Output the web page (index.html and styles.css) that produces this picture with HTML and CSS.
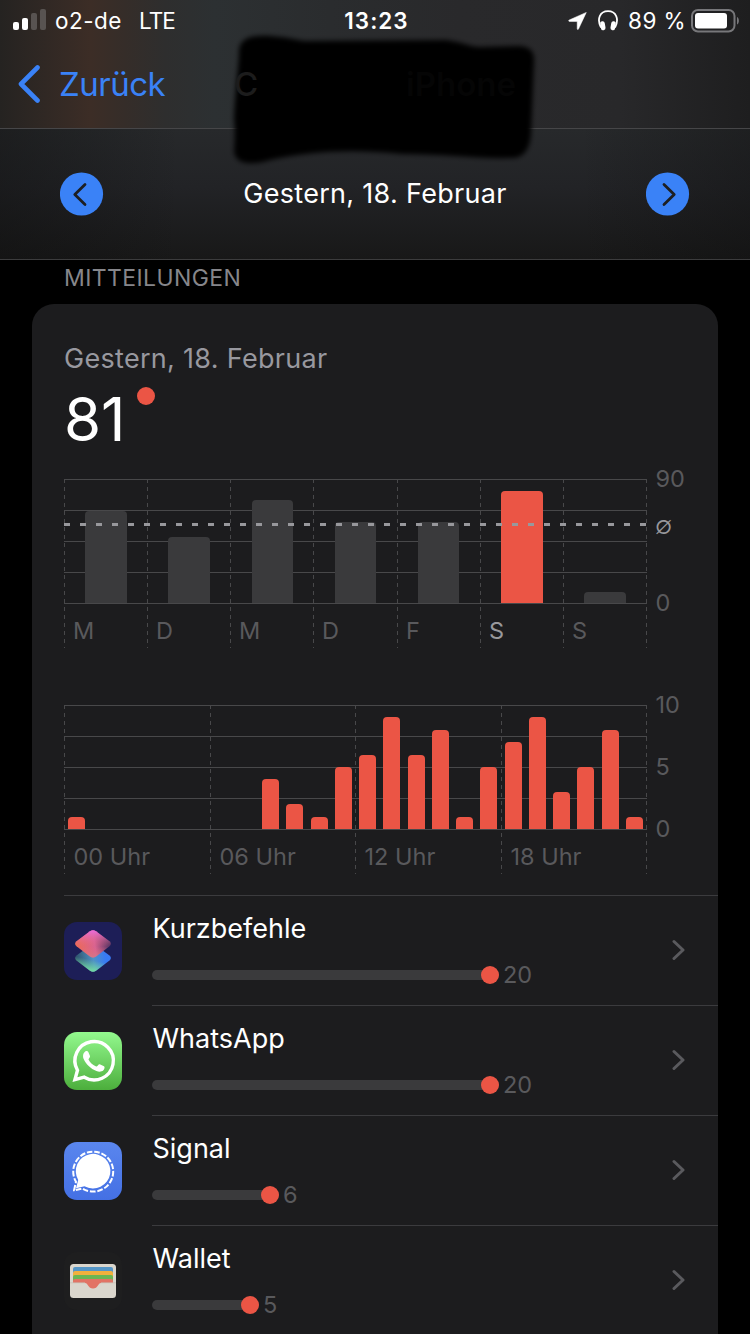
FILE: index.html
```html
<!doctype html>
<html lang="de">
    <head>
        <meta charset="UTF-8" />
        <meta name="viewport" content="width=device-width, initial-scale=1.0" />
        <title>Bildschirmzeit</title>
        <link rel="stylesheet" href="styles.css">
    </head>
    <body>
        <header class="header">
            <div class="nav">
                <div class="status">
                    <div class="status-left">
                        <svg class="signal" width="34" height="22" viewBox="0 0 34 22">
                            <rect x="0" y="13" width="6" height="8" rx="2" fill="#fff" />
                            <rect x="9" y="9" width="6" height="12" rx="2" fill="#fff" />
                            <rect x="18" y="4" width="6" height="17" rx="2" fill="#585351" />
                            <rect x="27" y="0" width="6" height="21" rx="2" fill="#585351" />
                        </svg>
                        <span class="carrier">o2-de</span>
                        <span class="network">LTE</span>
                    </div>
                    <span class="clock">13:23</span>
                    <div class="status-right">
                        <svg width="19" height="18" viewBox="0 0 19 18">
                            <path d="M18.300 .4 10.500 17c-.4.8-1.300.6-1.300-.3V9.400H1.500c-1 0-1.200-1-.3-1.400Z" fill="#fff" stroke="#fff" stroke-width=".5" stroke-linejoin="round" />
                        </svg>
                        <svg class="phones" width="20" height="21" viewBox="0 0 20 21">
                            <path d="M3 17.500C-1.500 9 2 1.200 10 1.200s11.500 7.800 7 16.300" fill="none" stroke="#fff" stroke-width="1.800" />
                            <rect x="2.600" y="11.200" width="4.600" height="9" rx="2.200" fill="#fff" transform="rotate(-10 5 16)" />
                            <rect x="12.800" y="11.200" width="4.600" height="9" rx="2.200" fill="#fff" transform="rotate(10 15 16)" />
                        </svg>
                        <span class="percent">89 %</span>
                        <svg width="49" height="24" viewBox="0 0 49 24">
                            <rect x="1" y="1" width="42.500" height="21.500" rx="6" fill="none" stroke="#77777a" stroke-width="2" />
                            <rect x="4" y="4" width="32" height="15.500" rx="3" fill="#fff" />
                            <path d="M46 8c2.500 1 2.500 6.500 0 7.500Z" fill="#77777a" />
                        </svg>
                    </div>
                </div>
                <div class="nav-row">
                    <svg width="24" height="38" viewBox="0 0 24 38">
                        <path d="M20.500 2.500 4 19l16.500 16.500" fill="none" stroke="#3a82f7" stroke-width="4.600" stroke-linecap="round" stroke-linejoin="round" />
                    </svg>
                    <span class="back">Zurück</span>
                </div>
            </div>
            <div class="day-nav">
                <svg width="44" height="44" viewBox="0 0 44 44">
                    <circle cx="21.500" cy="22" r="21.600" fill="#3a82f7" />
                    <path d="M25 12.500 14.800 22.500 25 32.500" fill="none" stroke="#1d1f22" stroke-width="2.800" stroke-linecap="round" stroke-linejoin="round" />
                </svg>
                <span class="day">Gestern, 18. Februar</span>
                <svg width="44" height="44" viewBox="0 0 44 44">
                    <circle cx="21.500" cy="22" r="21.600" fill="#3a82f7" />
                    <path d="M18 12.500 28.200 22.500 18 32.500" fill="none" stroke="#1d1f22" stroke-width="2.800" stroke-linecap="round" stroke-linejoin="round" />
                </svg>
            </div>
            <!-- blacked out device name -->
            <svg class="marker" width="330" height="150" viewBox="220 25 330 150">
                <defs>
                    <filter id="soft" x="-10%" y="-10%" width="120%" height="120%">
                        <feGaussianBlur stdDeviation="2.800" />
                    </filter>
                </defs>
                <path d="M246 39c10-6 34-3 58 2l142-1c16 2 24 7 34 7l38-1c12 0 17 6 16 16l-3 72c-1 16-8 24-19 24-36 1-66-4-110-4-50-5-92-3-132 6-20 6-34 4-36-8 1-16 1-25 0-32 1-28 5-56 5-68 0-6 2-10 7-13Z" fill="#000" filter="url(#soft)" />
                <text x="234" y="96" class="marker-start">C</text>
                <text x="406" y="96" class="marker-end">iPhone</text>
            </svg>
        </header>

        <h2>MITTEILUNGEN</h2>

        <section class="card">
            <div class="card-date">Gestern, 18. Februar</div>
            <div class="total"><span>81</span><i class="total-dot"></i></div>

            <svg class="week-chart" width="654" height="200" viewBox="0 0 654 200">
                <path class="grid" d="M0 15.500h583M0 46.500h583M0 77.500h583M0 108.500h583M0 139.500h583" />
                <path class="grid dashed" d="M.5 15v169M83.500 15v169M166.500 15v169M249.500 15v169M333.500 15v169M416.500 15v169M499.500 15v169M582.500 15v169" />
                <clipPath id="week-plot"><rect width="583" height="139" /></clipPath>
                <g class="bars muted" clip-path="url(#week-plot)">
                    <rect x="21" y="47" width="42" height="100" rx="4" />
                    <rect x="104" y="73" width="42" height="100" rx="4" />
                    <rect x="188" y="36" width="41" height="120" rx="4" />
                    <rect x="271" y="58" width="41" height="100" rx="4" />
                    <rect x="354" y="58" width="41" height="100" rx="4" />
                    <rect class="active" x="437" y="27" width="42" height="120" rx="4" />
                    <rect x="520" y="128" width="42" height="40" rx="4" />
                </g>
                <path class="average" d="M0 60.500h583" />
                <g class="labels">
                    <text x="9" y="175">M</text>
                    <text x="92" y="175">D</text>
                    <text x="175" y="175">M</text>
                    <text x="258" y="175">D</text>
                    <text x="342" y="175">F</text>
                    <text x="425" y="175" class="current">S</text>
                    <text x="508" y="175">S</text>
                    <text x="591.500" y="23">90</text>
                    <text x="591" y="70" class="avg-label">∅</text>
                    <text x="591.500" y="147">0</text>
                </g>
            </svg>

            <svg class="hour-chart" width="654" height="205" viewBox="0 0 654 205">
                <path class="grid" d="M0 15.500h583M0 46.500h583M0 77.500h583M0 108.500h583M0 139.500h583" />
                <path class="grid dashed" d="M.5 15v169M146.500 15v169M291.500 15v169M437.500 15v169M582.500 15v169" />
                <clipPath id="hour-plot"><rect width="583" height="139" /></clipPath>
                <g class="bars" clip-path="url(#hour-plot)">
                    <rect x="4" y="127" width="17" height="30" rx="4" />
                    <rect x="198" y="89" width="17" height="70" rx="4" />
                    <rect x="222" y="114" width="17" height="40" rx="4" />
                    <rect x="247" y="127" width="17" height="30" rx="4" />
                    <rect x="271" y="77" width="17" height="80" rx="4" />
                    <rect x="295" y="65" width="17" height="90" rx="4" />
                    <rect x="319" y="27" width="17" height="130" rx="4" />
                    <rect x="344" y="65" width="17" height="90" rx="4" />
                    <rect x="368" y="40" width="17" height="110" rx="4" />
                    <rect x="392" y="127" width="17" height="30" rx="4" />
                    <rect x="416" y="77" width="17" height="80" rx="4" />
                    <rect x="441" y="52" width="17" height="100" rx="4" />
                    <rect x="465" y="27" width="17" height="130" rx="4" />
                    <rect x="489" y="102" width="17" height="50" rx="4" />
                    <rect x="513" y="77" width="17" height="80" rx="4" />
                    <rect x="538" y="40" width="17" height="110" rx="4" />
                    <rect x="562" y="127" width="17" height="30" rx="4" />
                </g>
                <g class="labels">
                    <text x="9.500" y="175">00 Uhr</text>
                    <text x="155.500" y="175">06 Uhr</text>
                    <text x="300.500" y="175">12 Uhr</text>
                    <text x="446.500" y="175">18 Uhr</text>
                    <text x="591.500" y="23">10</text>
                    <text x="591.500" y="85">5</text>
                    <text x="591.500" y="147">0</text>
                </g>
            </svg>

            <ul class="apps">
                <li>
                    <svg class="app-icon" viewBox="0 0 58 58">
                        <defs>
                            <linearGradient id="sc-top" x1="0" y1=".6" x2="1" y2=".5">
                                <stop offset="0" stop-color="#ee6b52" />
                                <stop offset=".55" stop-color="#d96391" />
                                <stop offset="1" stop-color="#4a3060" />
                            </linearGradient>
                            <linearGradient id="sc-pink" x1=".5" y1="0" x2=".5" y2="1">
                                <stop offset="0" stop-color="#ea6be0" />
                                <stop offset=".6" stop-color="#e66a78" stop-opacity="0" />
                                <stop offset="1" stop-color="#d08088" stop-opacity=".7" />
                            </linearGradient>
                            <linearGradient id="sc-bottom" x1="0" y1=".5" x2="1" y2=".4">
                                <stop offset="0" stop-color="#2c4f66" />
                                <stop offset=".5" stop-color="#4f93c4" />
                                <stop offset=".85" stop-color="#377af5" />
                            </linearGradient>
                            <linearGradient id="sc-green" x1=".6" y1=".3" x2=".4" y2="1">
                                <stop offset=".4" stop-color="#77e3a0" stop-opacity="0" />
                                <stop offset="1" stop-color="#77e3a0" />
                            </linearGradient>
                        </defs>
                        <rect width="58" height="58" rx="13" fill="#1d1e57" />
                        <path d="M26 23.500q3-2.200 6 0l13.500 10q2.800 2.500 0 5L32 48.700q-3 2.200-6 0L12.500 38.500q-2.800-2.500 0-5Z" fill="url(#sc-bottom)" />
                        <path d="M26 23.500q3-2.200 6 0l13.500 10q2.800 2.500 0 5L32 48.700q-3 2.200-6 0L12.500 38.500q-2.800-2.500 0-5Z" fill="url(#sc-green)" />
                        <path d="M26 9.300q3-2.200 6 0l13.500 10q2.800 2.500 0 5L32 34.500q-3 2.200-6 0L12.500 24.300q-2.800-2.500 0-5Z" fill="url(#sc-top)" />
                        <path d="M26 9.300q3-2.200 6 0l13.500 10q2.800 2.500 0 5L32 34.500q-3 2.200-6 0L12.500 24.300q-2.800-2.500 0-5Z" fill="url(#sc-pink)" />
                    </svg>
                    <div class="app-body">
                        <div class="app-info">
                            <div class="app-name">Kurzbefehle</div>
                            <div class="usage"><span class="track" style="width: 347px"></span><span class="count">20</span></div>
                        </div>
                        <svg class="chevron" viewBox="0 0 14 22"><path d="m2 2.500 9 8.500-9 8.500" /></svg>
                    </div>
                </li>
                <li>
                    <svg class="app-icon" viewBox="0 0 58 58">
                        <defs>
                            <linearGradient id="wa" x1="0" y1="0" x2="0" y2="1">
                                <stop offset="0" stop-color="#93f98e" />
                                <stop offset="1" stop-color="#4cae3c" />
                            </linearGradient>
                        </defs>
                        <rect width="58" height="58" rx="13" fill="url(#wa)" />
                        <path d="M10.900 47.700 13.500 38.300A19.200 19.200 0 1 1 20.300 45.200Z" fill="none" stroke="#fff" stroke-width="3.400" stroke-linejoin="miter" />
                        <path d="M21.500 19.300c1-.6 2.300-.5 2.800.6l1.700 4c.5 1.300-1.800 2.800-1.500 3.600 1.500 3 4.500 5.700 7.700 7 1 .2 2.400-2.600 3.500-2.200l4.300 2c1.100.6.500 2.800-.6 4-2 1.700-4.500 1.700-6.900.8-6-2.300-10.500-6.800-12.800-12-1.300-3-.5-6.300 1.800-7.800Z" fill="#fff" />
                    </svg>
                    <div class="app-body">
                        <div class="app-info">
                            <div class="app-name">WhatsApp</div>
                            <div class="usage"><span class="track" style="width: 347px"></span><span class="count">20</span></div>
                        </div>
                        <svg class="chevron" viewBox="0 0 14 22"><path d="m2 2.500 9 8.500-9 8.500" /></svg>
                    </div>
                </li>
                <li>
                    <svg class="app-icon" viewBox="0 0 58 58">
                        <defs>
                            <linearGradient id="sg" x1="0" y1="0" x2="0" y2="1">
                                <stop offset="0" stop-color="#5a86ee" />
                                <stop offset="1" stop-color="#4470e4" />
                            </linearGradient>
                        </defs>
                        <rect width="58" height="58" rx="13" fill="url(#sg)" />
                        <path d="M12 46.300 14.200 38A17.300 17.300 0 1 1 20.500 44.200Z" fill="#fff" />
                        <path d="M10 48.500l2-8.700A20 20 0 1 1 18.500 46.500Z" fill="none" stroke="#fff" stroke-width="2" stroke-dasharray="5.600 1.800" stroke-linejoin="round" />
                    </svg>
                    <div class="app-body">
                        <div class="app-info">
                            <div class="app-name">Signal</div>
                            <div class="usage"><span class="track" style="width: 127px"></span><span class="count">6</span></div>
                        </div>
                        <svg class="chevron" viewBox="0 0 14 22"><path d="m2 2.500 9 8.500-9 8.500" /></svg>
                    </div>
                </li>
                <li>
                    <svg class="app-icon" viewBox="0 0 58 58">
                        <rect width="58" height="58" rx="13" fill="#1e1e1f" />
                        <rect x="6" y="12" width="46" height="34" rx="3.500" fill="#dad6cd" />
                        <path d="M9 31V17q0-2 2-2h36q2 0 2 2v14Z" fill="#5596c7" />
                        <path d="M9 31V21q0-2 2-2h36q2 0 2 2v10Z" fill="#f2b03d" />
                        <path d="M9 31v-6q0-2 2-2h36q2 0 2 2v6Z" fill="#6bb653" />
                        <path d="M9 31v-2q0-2 2-2h36q2 0 2 2v2H37c-3 0-3 5.500-8 5.500S24 31 21 31Z" fill="#e27365" />
                        <path d="M6 30.800h15M37 30.800h15" stroke="#c5c0b7" stroke-width=".8" />
                    </svg>
                    <div class="app-body">
                        <div class="app-info">
                            <div class="app-name">Wallet</div>
                            <div class="usage"><span class="track" style="width: 107px"></span><span class="count">5</span></div>
                        </div>
                        <svg class="chevron" viewBox="0 0 14 22"><path d="m2 2.500 9 8.500-9 8.500" /></svg>
                    </div>
                </li>
            </ul>
        </section>
    </body>
</html>
```
FILE: styles.css
```css
* {
    margin: 0;
    padding: 0;
    box-sizing: border-box;
}

body {
    width: 750px;
    height: 1334px;
    overflow: hidden;
    background-color: #000;
    color: #fff;
    font-family: Inter, 'Liberation Sans', sans-serif;
}

svg {
    display: block;
    flex-shrink: 0;
}

/* Header */
.header {
    position: relative;
}

.nav {
    height: 129px;
    border-bottom: 1px solid #464648;
    background: linear-gradient(90deg, #252321 0, #302824 45px, #3c2d26 90px, #352d29 125px, #2e2e2e 165px, #2c3032 215px, #2a2c2e 330px, #29292b 460px, #28282a 620px, #1e1e1f 750px);
}

.status {
    display: grid;
    grid-template-columns: 1fr auto 1fr;
    align-items: center;
    height: 41px;
    padding: 0 10px 0 13px;
    font-size: 22.5px;
}

.status-left,
.status-right {
    display: flex;
    align-items: center;
}

.signal {
    margin-bottom: 2px;
}

.carrier {
    margin-left: 8px;
    letter-spacing: 0.5px;
}

.network {
    margin-left: 17px;
    letter-spacing: -0.9px;
}

.clock {
    font-weight: 600;
    letter-spacing: 1px;
}

.status-right {
    justify-content: flex-end;
}

.phones {
    margin-left: 11px;
}

.percent {
    margin: 0 5px 0 10px;
    letter-spacing: 0.4px;
}

.nav-row {
    display: flex;
    align-items: center;
    height: 86px;
    padding-left: 17px;
}

.back {
    margin-left: 18px;
    font-size: 33px;
    letter-spacing: -0.5px;
    color: #3a82f7;
}

.day-nav {
    display: flex;
    justify-content: space-between;
    align-items: center;
    height: 131px;
    padding: 0 60px;
    border-bottom: 1px solid #3c3c3d;
    background:
        linear-gradient(90deg, rgba(14, 14, 14, 0.4) 0, transparent 180px, transparent 580px, rgba(14, 14, 14, 0.35) 750px),
        linear-gradient(#27292b, #222326 45%, #181818);
}

.day {
    font-size: 27px;
    letter-spacing: 0.3px;
    line-height: 34px;
}

.marker {
    position: absolute;
    left: 220px;
    top: 25px;
}

.marker-start,
.marker-end {
    font-size: 33px;
    font-weight: 500;
    fill: #1c1c1c;
}

.marker-end {
    font-weight: 600;
    fill: #050505;
}

h2 {
    height: 44px;
    padding-left: 64px;
    font-size: 23px;
    font-weight: 400;
    letter-spacing: 0.4px;
    line-height: 36px;
    color: #86868b;
}

/* Card */
.card {
    width: 686px;
    height: 1030px;
    overflow: hidden;
    margin-left: 32px;
    padding: 38px 0 0 32px;
    border-radius: 22px 22px 0 0;
    background-color: #1c1c1e;
}

.card-date {
    font-size: 27px;
    letter-spacing: 0.3px;
    line-height: 34px;
    color: #98989f;
}

.total {
    display: flex;
    height: 88px;
    font-size: 60px;
    line-height: 86px;
}

.total-dot {
    width: 18px;
    height: 18px;
    margin: 11px 0 0 11px;
    border-radius: 50%;
    background-color: #eb5545;
}

/* Charts */
.hour-chart {
    margin-top: 26px;
}

.grid {
    fill: none;
    stroke: #48484a;
    stroke-width: 1;
}

.dashed {
    stroke-dasharray: 4 4;
}

.bars {
    fill: #eb5545;
}

.muted {
    fill: #3a3a3c;
}

.active {
    fill: #eb5545;
}

.average {
    stroke: #98989c;
    stroke-width: 3;
    stroke-dasharray: 6 10;
}

.labels {
    font-size: 23.5px;
    fill: #59595c;
}

.current,
.avg-label {
    fill: #98989c;
}

.avg-label {
    font-size: 25px;
    font-weight: 300;
}

/* App list */
.apps {
    list-style: none;
    border-top: 1px solid #3b3b3e;
}

.apps li {
    display: flex;
    height: 110px;
}

.app-icon {
    width: 58px;
    height: 58px;
    margin: 26px 30px 0 0;
}

.app-body {
    display: flex;
    flex: 1;
    justify-content: space-between;
    align-items: center;
    padding-right: 32px;
    border-bottom: 1px solid #3b3b3e;
}

.app-info {
    align-self: flex-start;
    padding-top: 16px;
}

.app-name {
    padding-left: 0.5px;
    font-size: 27px;
    line-height: 34px;
}

.usage {
    display: flex;
    align-items: center;
    height: 24px;
    margin-top: 17px;
}

.track {
    position: relative;
    height: 10px;
    border-radius: 5px;
    background-color: #3a3a3c;
}

.track::after {
    content: '';
    position: absolute;
    right: 0;
    top: -4px;
    width: 18px;
    height: 18px;
    border-radius: 50%;
    background-color: #eb5545;
}

.count {
    margin: 0 0 2px 4px;
    font-size: 23.5px;
    color: #59595c;
}

.chevron {
    width: 14px;
    height: 22px;
    margin-bottom: 2px;
}

.chevron path {
    fill: none;
    stroke: #5a5a5e;
    stroke-width: 3;
    stroke-linecap: round;
    stroke-linejoin: round;
}
```
